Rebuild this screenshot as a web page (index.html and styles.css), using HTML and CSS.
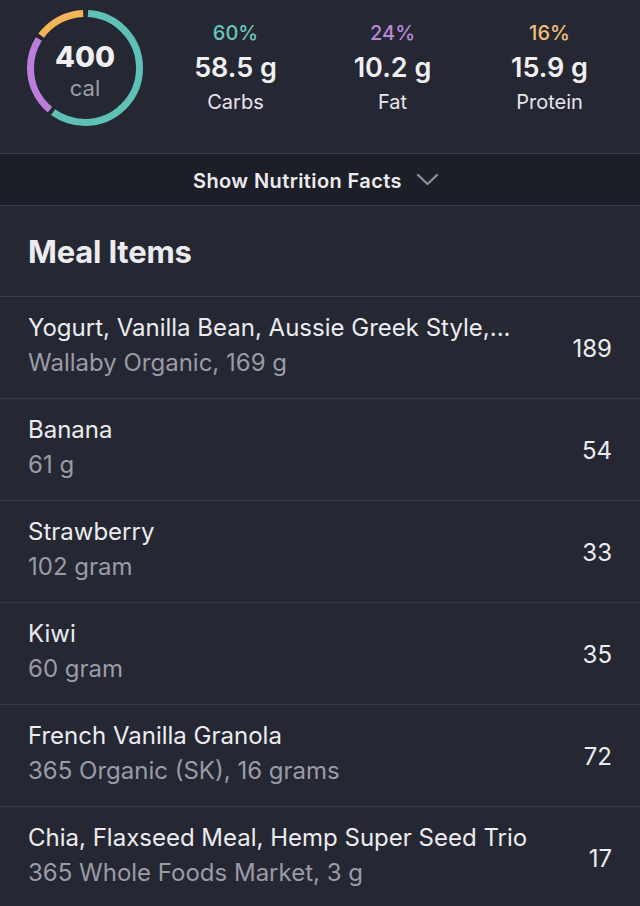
FILE: index.html
```html
<!DOCTYPE html>
<html lang="en">
<head>
    <meta charset="UTF-8">
    <meta name="viewport" content="width=device-width, initial-scale=1.0">
    <title>Meal</title>
    <link rel="stylesheet" href="styles.css">
</head>
<body>
    <div class="summary">
        <div class="ring">
            <svg width="120" height="120" viewBox="0 0 120 120">
                <!-- circumference = 2 * pi * 54.5 = 342.4 -->
                <g transform="rotate(-90 60 60)" fill="none" stroke-width="7">
                    <circle cx="60" cy="60" r="54.5" stroke="#5dc1b6" stroke-dasharray="202 400" stroke-dashoffset="-3"></circle>
                    <circle cx="60" cy="60" r="54.5" stroke="#bd7ddc" stroke-dasharray="78 400" stroke-dashoffset="-209"></circle>
                    <circle cx="60" cy="60" r="54.5" stroke="#f2b55a" stroke-dasharray="49 400" stroke-dashoffset="-291"></circle>
                </g>
            </svg>
            <div class="ring-text">
                <div class="cal-num">400</div>
                <div class="cal-unit">cal</div>
            </div>
        </div>
        <div class="macro">
            <div class="pct carbs">60%</div>
            <div class="amount">58.5 g</div>
            <div class="macro-name">Carbs</div>
        </div>
        <div class="macro">
            <div class="pct fat">24%</div>
            <div class="amount">10.2 g</div>
            <div class="macro-name">Fat</div>
        </div>
        <div class="macro">
            <div class="pct protein">16%</div>
            <div class="amount">15.9 g</div>
            <div class="macro-name">Protein</div>
        </div>
    </div>

    <div class="facts-toggle">
        <span>Show Nutrition Facts</span>
        <svg width="23" height="13" viewBox="0 0 23 13">
            <path d="M2 2 L11.5 11 L21 2" fill="none" stroke="#8a8c96" stroke-width="2.4" stroke-linecap="round" stroke-linejoin="round"></path>
        </svg>
    </div>

    <div class="section-title">Meal Items</div>

    <ul class="items">
        <li class="item">
            <div class="item-info">
                <div class="item-name">Yogurt, Vanilla Bean, Aussie Greek Style,...</div>
                <div class="item-sub">Wallaby Organic, 169 g</div>
            </div>
            <div class="item-cal">189</div>
        </li>
        <li class="item">
            <div class="item-info">
                <div class="item-name">Banana</div>
                <div class="item-sub">61 g</div>
            </div>
            <div class="item-cal">54</div>
        </li>
        <li class="item">
            <div class="item-info">
                <div class="item-name">Strawberry</div>
                <div class="item-sub">102 gram</div>
            </div>
            <div class="item-cal">33</div>
        </li>
        <li class="item">
            <div class="item-info">
                <div class="item-name">Kiwi</div>
                <div class="item-sub">60 gram</div>
            </div>
            <div class="item-cal">35</div>
        </li>
        <li class="item">
            <div class="item-info">
                <div class="item-name">French Vanilla Granola</div>
                <div class="item-sub">365 Organic (SK), 16 grams</div>
            </div>
            <div class="item-cal">72</div>
        </li>
        <li class="item">
            <div class="item-info">
                <div class="item-name">Chia, Flaxseed Meal, Hemp Super Seed Trio</div>
                <div class="item-sub">365 Whole Foods Market, 3 g</div>
            </div>
            <div class="item-cal">17</div>
        </li>
    </ul>
</body>
</html>
```

FILE: styles.css
```css
body {
    margin: 0;
    background-color: #252733;
    color: #ececef;
    font-family: Inter, "Noto Sans", sans-serif;
    overflow: hidden;
}

.summary {
    display: flex;
    align-items: flex-start;
    height: 154px;
    padding: 0 0 0 25px;
    box-sizing: border-box;
    border-bottom: 1px solid #3a3d4b;
}

.ring {
    position: relative;
    width: 120px;
    height: 120px;
    margin-top: 8px;
    flex-shrink: 0;
}

.ring svg {
    display: block;
}

.ring-text {
    position: absolute;
    top: 0;
    left: 0;
    right: 0;
    bottom: 0;
    padding-top: 7px;
    display: flex;
    flex-direction: column;
    align-items: center;
    justify-content: center;
}

.cal-num {
    font-size: 29px;
    font-weight: 800;
    line-height: 32px;
    color: #f0f0f2;
}

.cal-unit {
    font-size: 22px;
    line-height: 30px;
    color: #9c9ea7;
}

.macro {
    width: 157px;
    text-align: center;
}

.summary .ring + .macro {
    margin-left: 12px;
}

.pct {
    margin-top: 20px;
    font-size: 20px;
    line-height: 26px;
    font-weight: 500;
}

.pct.carbs {
    color: #6ac6bb;
}

.pct.fat {
    color: #b788d6;
}

.pct.protein {
    color: #f0c07a;
}

.amount {
    margin-top: 6px;
    font-size: 27px;
    line-height: 32px;
    font-weight: 600;
    color: #f0f0f2;
}

.macro-name {
    margin-top: 5px;
    font-size: 20px;
    line-height: 26px;
    color: #e6e6ea;
}

.facts-toggle {
    display: flex;
    justify-content: center;
    align-items: center;
    gap: 14px;
    height: 52px;
    box-sizing: border-box;
    padding: 2px 8px 0 0;
    background-color: #1d1f28;
    border-bottom: 1px solid #3a3d4b;
    font-size: 20px;
    font-weight: 600;
    letter-spacing: 0.4px;
    color: #ececef;
}

.facts-toggle svg {
    margin-top: -2px;
}

.section-title {
    height: 91px;
    box-sizing: border-box;
    padding: 27px 28px 0;
    font-size: 31px;
    font-weight: 700;
    letter-spacing: -0.2px;
    color: #ececef;
    border-bottom: 1px solid #3a3d4b;
}

.items {
    list-style: none;
    margin: 0;
    padding: 0;
}

.item {
    display: flex;
    justify-content: space-between;
    align-items: center;
    height: 102px;
    box-sizing: border-box;
    padding: 0 28px 4px;
    border-bottom: 1px solid #363947;
}

.item-name {
    font-size: 24px;
    line-height: 30px;
    color: #ececef;
}

.item-sub {
    margin-top: 5px;
    font-size: 24px;
    line-height: 30px;
    color: #9a9ca5;
}

.item-cal {
    margin-top: 6px;
    font-size: 24px;
    color: #ececef;
}
```
